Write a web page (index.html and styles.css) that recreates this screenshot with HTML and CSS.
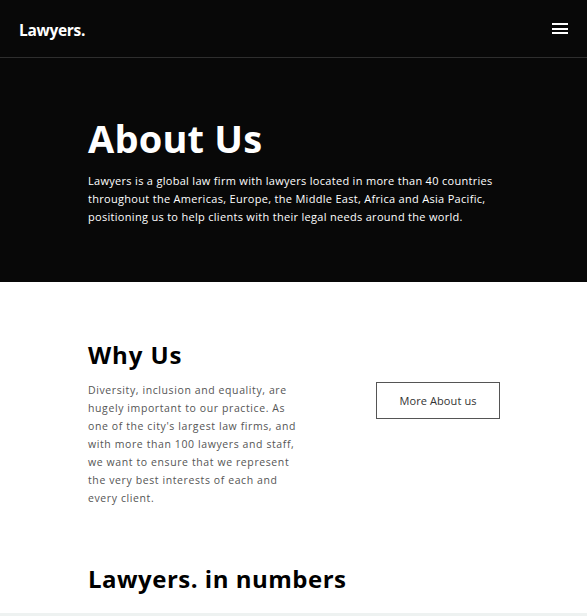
FILE: index.html
```html
<!DOCTYPE html>
<html lang="en">
<head>
<meta charset="utf-8">
<title>About Us - Lawyers.</title>
<link rel="stylesheet" href="styles.css">
</head>
<body>
<header class="topbar">
  <a class="logo" href="#">Lawyers.</a>
  <button class="menu" aria-label="Menu">
    <span></span><span></span><span></span>
  </button>
</header>
<section class="hero">
  <div class="wrap">
    <h1>About Us</h1>
    <p>Lawyers is a global law firm with lawyers located in more than 40 countries throughout the Americas, Europe, the Middle East, Africa and Asia Pacific, positioning us to help clients with their legal needs around the world.</p>
  </div>
</section>
<section class="why">
  <div class="wrap">
    <h2>Why Us</h2>
    <div class="why-row">
      <p>Diversity, inclusion and equality, are hugely important to our practice. As one of the city's largest law firms, and with more than 100 lawyers and staff, we want to ensure that we represent the very best interests of each and every client.</p>
      <a class="btn" href="#">More About us</a>
    </div>
  </div>
</section>
<section class="numbers">
  <div class="wrap">
    <h2>Lawyers. in numbers</h2>
  </div>
</section>
<div class="band"></div>
</body>
</html>
```
FILE: styles.css
```css
* { box-sizing: border-box; }
body {
  margin: 0;
  font-family: "Open Sans", "DejaVu Sans", sans-serif;
  background: #fff;
}
.topbar {
  height: 58px;
  background: #080808;
  border-bottom: 1px solid #2e2e2e;
  display: flex;
  align-items: center;
  justify-content: space-between;
  padding: 0 19px 0 19px;
}
.logo {
  color: #fff;
  text-decoration: none;
  font-weight: 700;
  font-size: 15.5px;
  letter-spacing: -0.3px;
  margin-top: 2px;
}
.menu {
  background: none;
  border: 0;
  padding: 0;
  width: 16px;
  display: flex;
  flex-direction: column;
  gap: 2.5px;
}
.menu span {
  display: block;
  height: 2px;
  background: #fff;
}
.wrap {
  padding: 0 88px;
}
.hero {
  background: #080808;
  color: #fff;
  height: 224px;
  padding-top: 58px;
}
.hero h1 {
  margin: 0;
  font-size: 38px;
  font-weight: 700;
  line-height: 44px;
  letter-spacing: 0.2px;
}
.hero p {
  margin: 12px 0 0;
  font-size: 11px;
  line-height: 18px;
  letter-spacing: 0.3px;
}
.why {
  padding-top: 58px;
}
.why h2, .numbers h2 {
  margin: 0;
  font-size: 24px;
  font-weight: 700;
  line-height: 30px;
  color: #000;
  letter-spacing: 0.5px;
}
.why h2 { letter-spacing: 0.9px; }
.why-row {
  display: flex;
  justify-content: space-between;
  align-items: flex-start;
  margin-top: 11px;
}
.why-row p {
  margin: 0;
  width: 220px;
  font-size: 10.5px;
  line-height: 18px;
  color: #555;
  letter-spacing: 0.6px;
}
.btn {
  margin-top: 1px;
  margin-right: -1px;
  width: 124px;
  height: 37px;
  border: 1px solid #555;
  display: flex;
  align-items: center;
  justify-content: center;
  color: #333;
  font-size: 11px;
  text-decoration: none;
  letter-spacing: 0.1px;
}
.numbers {
  padding-top: 57px;
  height: 106px;
}
.band {
  height: 40px;
  background: #eef2f1;
}
```
